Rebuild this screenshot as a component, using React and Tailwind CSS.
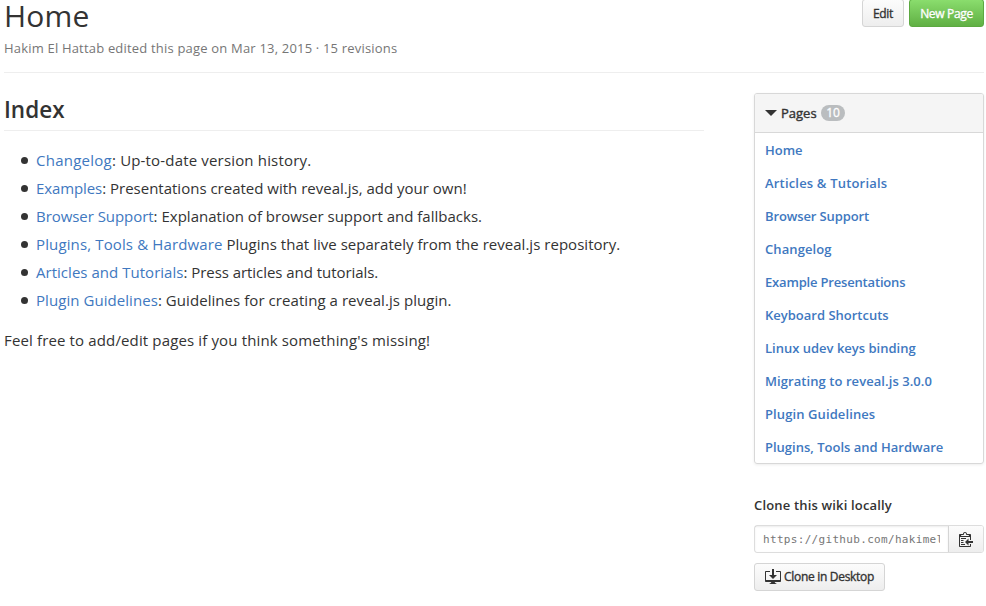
const sans = "font-['Open_Sans','Noto_Sans',sans-serif]";

const entries = [
  ["Changelog", ": Up-to-date version history.", "tracking-[0.25px]", "tracking-[0.17px]"],
  ["Examples", ": Presentations created with reveal.js, add your own!", "tracking-[-0.1px]", "tracking-normal"],
  ["Browser Support", ": Explanation of browser support and fallbacks.", "tracking-[-0.05px]", "tracking-[0.01px]"],
  ["Plugins, Tools & Hardware", " Plugins that live separately from the reveal.js repository.", "tracking-[0.13px]", "tracking-[0.03px]"],
  ["Articles and Tutorials", ": Press articles and tutorials.", "tracking-[0.03px]", "tracking-[-0.05px]"],
  ["Plugin Guidelines", ": Guidelines for creating a reveal.js plugin.", "tracking-[0.06px]", "tracking-[0.06px]"],
];

const pages = [
  ["Home", "tracking-normal"],
  ["Articles & Tutorials", "tracking-[0.18px]"],
  ["Browser Support", "tracking-[-0.12px]"],
  ["Changelog", "tracking-[0.1px]"],
  ["Example Presentations", "tracking-[-0.18px]"],
  ["Keyboard Shortcuts", "tracking-normal"],
  ["Linux udev keys binding", "tracking-normal"],
  ["Migrating to reveal.js 3.0.0", "tracking-[0.07px]"],
  ["Plugin Guidelines", "tracking-[0.1px]"],
  ["Plugins, Tools and Hardware", "tracking-normal"],
];

function ClippyIcon() {
  return (
    <svg width="14" height="16" viewBox="0 0 14 16" fill="currentColor">
      <path d="M2 13h4v1H2v-1zm5-6H2v1h5V7zm2.500 3V7.500L6 11l3.500 3.500V12H14v-2H9.500zM4.500 9H2v1h2.500V9zM2 12h2.500v-1H2v1zm9 1h1v2c-.02.28-.11.52-.3.7-.19.18-.42.28-.7.3H1c-.55 0-1-.45-1-1V4c0-.55.45-1 1-1h3c0-1.110.89-2 2-2 1.110 0 2 .89 2 2h3c.55 0 1 .45 1 1v5h-1V6H1v9h10v-2zM2 5h8c0-.55-.45-1-1-1H8c-.55 0-1-.45-1-1s-.45-1-1-1-1 .45-1 1-.45 1-1 1H3c-.55 0-1 .45-1 1z" />
    </svg>
  );
}

function DesktopDownloadIcon() {
  return (
    <svg width="16" height="16" viewBox="0 0 16 16" fill="currentColor">
      <path d="M4 6h3V0h2v6h3l-4 4-4-4zm11-4h-4v1h4v8H1V3h4V2H1c-.55 0-1 .45-1 1v9c0 .55.45 1 1 1h5.340c-.25.61-.86 1.390-2.340 2h8c-1.480-.61-2.090-1.390-2.340-2H15c.55 0 1-.45 1-1V3c0-.55-.45-1-1-1z" />
    </svg>
  );
}

function Header() {
  return (
    <header className="flex h-[73px] justify-between border-b border-[#eee]">
      <div>
        <h1 className="h-[38px] text-[30px] leading-8 tracking-[0.2px]">Home</h1>
        <p className="text-[13px] leading-5 tracking-[0.19px] text-[#767676]">
          Hakim El Hattab edited this page on Mar 13, 2015 · 15 revisions
        </p>
      </div>
      <div className="-mt-px flex h-7 gap-[5px] text-[12px] leading-[27px] tracking-[-0.33px] [-webkit-text-stroke:0.35px]">
        <button className="w-[42px] rounded-[3px] border border-[#d5d5d5] bg-linear-to-b from-[#fcfcfc] to-[#eee]">
          Edit
        </button>
        <button className="w-[75px] rounded-[3px] border border-[#5ca941] bg-linear-to-b from-[#8add6d] to-[#60b044] text-white [text-shadow:0_-1px_0_rgba(0,0,0,0.15)]">
          New Page
        </button>
      </div>
    </header>
  );
}

function Content() {
  return (
    <main className="w-[700px]">
      <h2 className="h-[38px] border-b border-[#eee] text-[22.500px] leading-[34px] font-semibold">Index</h2>
      <ul className="mt-[15px] text-[15px] leading-7">
        {entries.map(([name, text, nameTracking, textTracking]) => (
          <li key={name} className="flex items-center">
            <i className="mr-[8.500px] ml-[16.500px] size-[7px] rounded-full bg-[#333]" />
            <span className="whitespace-pre">
              <a className={`text-[#4078c0] ${nameTracking}`}>{name}</a>
              <span className={textTracking}>{text}</span>
            </span>
          </li>
        ))}
      </ul>
      <p className="mt-3 text-[15px] leading-7 tracking-[0.14px]">
        Feel free to add/edit pages if you think something's missing!
      </p>
    </main>
  );
}

function Sidebar() {
  return (
    <aside className="w-[230px]">
      <section className="h-[371px] rounded-[3px] border border-[#d8d8d8] shadow-[0_1px_3px_rgba(0,0,0,0.075)]">
        <h3 className="flex h-[39px] items-center rounded-t-[2px] border-b border-[#d8d8d8] bg-[#f5f5f5] pl-2.5 text-[13px]">
          <svg width="12" height="6" viewBox="0 0 12 6" fill="currentColor">
            <path d="M0 0h12L6 6z" />
          </svg>
          <span className="ml-1 w-10 pt-px [-webkit-text-stroke:0.4px]">Pages</span>
          <span className="h-4 w-6 rounded-full bg-[#babdbf] text-center text-[12px] leading-4 text-white [-webkit-text-stroke:0.3px]">10</span>
        </h3>
        <ul className="pt-px text-[13px] leading-[33px] font-semibold text-[#4078c0]">
          {pages.map(([page, tracking]) => (
            <li key={page} className="pl-2.5">
              <a className={tracking}>{page}</a>
            </li>
          ))}
        </ul>
      </section>
      <h4 className="mt-[31px] text-[13px] leading-5 font-semibold tracking-[0.17px]">Clone this wiki locally</h4>
      <div className="mt-2.5 flex h-7 rounded-[3px] border border-[#ddd]">
        <div className="w-[193px] px-2 shadow-[inset_0_1px_2px_rgba(0,0,0,0.075)]">
          <div className="overflow-hidden pt-px font-['DejaVu_Sans_Mono',monospace] text-[11px] leading-[25px] tracking-[0.32px] whitespace-nowrap text-[#767676]">
            https://github.com/hakimel/reveal.js.wiki.git
          </div>
        </div>
        <button className="flex flex-1 items-center justify-center rounded-r-[2px] border-l border-[#d5d5d5] bg-linear-to-b from-[#fcfcfc] to-[#eee]">
          <ClippyIcon />
        </button>
      </div>
      <button className="mt-2.5 flex h-7 w-[131px] items-center gap-[3px] rounded-[3px] border border-[#d5d5d5] bg-linear-to-b from-[#fcfcfc] to-[#eee] pl-2.5 text-[12px] tracking-[-0.3px] whitespace-nowrap">
        <DesktopDownloadIcon />
        <span className="[-webkit-text-stroke:0.35px]">Clone in Desktop</span>
      </button>
    </aside>
  );
}

export default function App() {
  return (
    <div className={`h-[606px] w-[986px] overflow-hidden bg-white pr-0.5 pl-1 text-[#333] ${sans}`}>
      <Header />
      <div className="mt-5 flex justify-between">
        <Content />
        <Sidebar />
      </div>
    </div>
  );
}
